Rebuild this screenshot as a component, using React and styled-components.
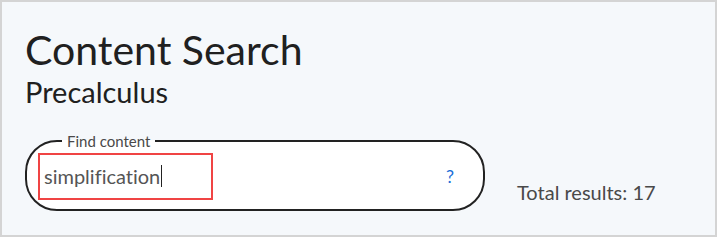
import styled, { createGlobalStyle } from 'styled-components';

const GlobalStyle = createGlobalStyle`
  html, body {
    margin: 0;
    padding: 0;
    background: #ffffff;
  }
  * {
    box-sizing: border-box;
  }
`;

const Frame = styled.div`
  width: 717px;
  height: 237px;
  border: 2px solid #d4d4d4;
  background-color: #f5f8fb;
  padding: 23px 23px 0;
  font-family: Lato, "Open Sans", sans-serif;
  font-variant-ligatures: none;
  color: #494949;
`;

const Title = styled.h1`
  margin: 0;
  font-size: 41px;
  font-weight: 400;
  line-height: 1.2;
  color: #202020;
`;

const Subtitle = styled.h2`
  margin: 1px 0 0;
  font-size: 29px;
  font-weight: 400;
  line-height: 1.2;
  color: #202020;
`;

const SearchRow = styled.div`
  display: flex;
  align-items: flex-end;
  gap: 32px;
  margin-top: 22px;
`;

const SearchField = styled.fieldset`
  margin: 0;
  width: 460px;
  padding: 3px 11px 9px;
  border: 2px solid #222222;
  border-radius: 32px;
  background-color: #ffffff;
  display: flex;
  align-items: center;
  justify-content: space-between;
`;

const Legend = styled.legend`
  margin-left: 24px;
  padding: 0 5px;
  font-size: 15px;
  line-height: 1.2;
  color: #494949;
`;

const QueryBox = styled.div`
  width: 175px;
  height: 47px;
  border: 2px solid #f04444;
  padding: 0 4px;
  display: flex;
  align-items: center;
  font-size: 20px;
  color: #555555;
`;

const Caret = styled.span`
  display: inline-block;
  width: 1px;
  height: 22px;
  margin-left: 1px;
  background-color: #222222;
`;

const HelpMark = styled.span`
  margin-right: 18px;
  font-size: 18px;
  color: #1a6fd8;
`;

const Total = styled.div`
  margin-bottom: 7px;
  font-size: 20px;
  line-height: 1.2;
  color: #494949;
`;

export default function App() {
  return (
    <>
      <GlobalStyle />
      <Frame>
        <Title>Content Search</Title>
        <Subtitle>Precalculus</Subtitle>
        <SearchRow>
          <SearchField>
            <Legend>Find content</Legend>
            <QueryBox>
              simplification
              <Caret />
            </QueryBox>
            <HelpMark>?</HelpMark>
          </SearchField>
          <Total>Total results: 17</Total>
        </SearchRow>
      </Frame>
    </>
  );
}
